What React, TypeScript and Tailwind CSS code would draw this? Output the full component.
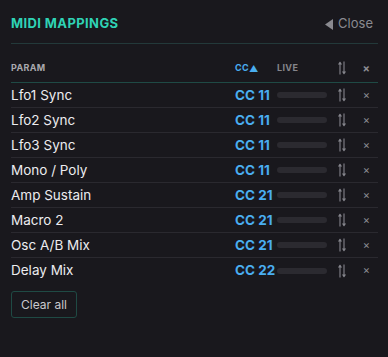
import React from 'react';

type Mapping = {
  param: string;
  cc: number;
};

const mappings: Mapping[] = [
  { param: 'Lfo1 Sync', cc: 11 },
  { param: 'Lfo2 Sync', cc: 11 },
  { param: 'Lfo3 Sync', cc: 11 },
  { param: 'Mono / Poly', cc: 11 },
  { param: 'Amp Sustain', cc: 21 },
  { param: 'Macro 2', cc: 21 },
  { param: 'Osc A/B Mix', cc: 21 },
  { param: 'Delay Mix', cc: 22 },
];

const cols = 'grid grid-cols-[1fr_42px_50px_28px_23px] items-center';

// up arrow on the left, down arrow on the right
const SwapIcon = () => (
  <svg width="10" height="16" viewBox="0 0 10 16" fill="none" className="text-[#85858c]">
    <path d="M3 14.5V2.5" stroke="currentColor" strokeWidth="1.1" />
    <path d="M0.9 4.6 3 1.4 5.1 4.6Z" fill="currentColor" />
    <path d="M7 1.5v12" stroke="currentColor" strokeWidth="1.1" />
    <path d="M4.9 11.4 7 14.6 9.1 11.4Z" fill="currentColor" />
  </svg>
);

const CloseX = () => (
  <span className="text-[11px] leading-none text-[#8c8c93]">×</span>
);

export default function App() {
  return (
    <div
      className="w-[388px] h-[357px] bg-[#19181d] px-[11px] pr-[10px] pt-[13px]"
      style={{ fontFamily: 'Inter, "Noto Sans", sans-serif' }}
    >
      {/* header */}
      <div className="flex items-center justify-between h-[22px]">
        <h2 className="text-[13px] font-bold tracking-[0.03em] text-[#2fd3b5]">MIDI MAPPINGS</h2>
        <button className="flex items-center gap-[5px] text-[13px] text-[#8a8a90] pr-[5px]">
          <svg width="8" height="11" viewBox="0 0 8 11">
            <path d="M8 0v11L0 5.5Z" fill="#8a8a90" />
          </svg>
          Close
        </button>
      </div>
      <div className="h-px bg-[#23393a] mt-[8px]" />

      {/* table head */}
      <div className={`${cols} h-[39px] pt-[10px] border-b border-[#1f4a45] text-[9px] font-bold tracking-[0.04em]`}>
        <span className="text-[#a9a9ae]">PARAM</span>
        <span className="text-[#4aaef0] flex items-center">
          CC<span className="text-[9px] leading-none">▲</span>
        </span>
        <span className="text-[#85858b]">LIVE</span>
        <span className="flex justify-center pl-[2px]"><SwapIcon /></span>
        <span className="flex justify-center"><CloseX /></span>
      </div>

      {/* rows */}
      <div>
        {mappings.map((m, i) => (
          <div
            key={m.param}
            className={`${cols} h-[25px] ${i < mappings.length - 1 ? 'border-b border-[#2a292f]' : ''}`}
          >
            <span className="text-[13.5px] text-[#ececef]">{m.param}</span>
            <span className="text-[13.5px] font-bold text-[#4aaef0]">CC {m.cc}</span>
            <span className="h-[6px] w-[50px] rounded-full bg-[#2b2a30]" />
            <span className="flex justify-center pl-[2px]"><SwapIcon /></span>
            <span className="flex justify-center"><CloseX /></span>
          </div>
        ))}
      </div>

      <button className="mt-[8px] h-[27px] w-[66px] rounded-[3px] border border-[#1f4a44] text-[12px] text-[#c9c9cd]">
        Clear all
      </button>
    </div>
  );
}
